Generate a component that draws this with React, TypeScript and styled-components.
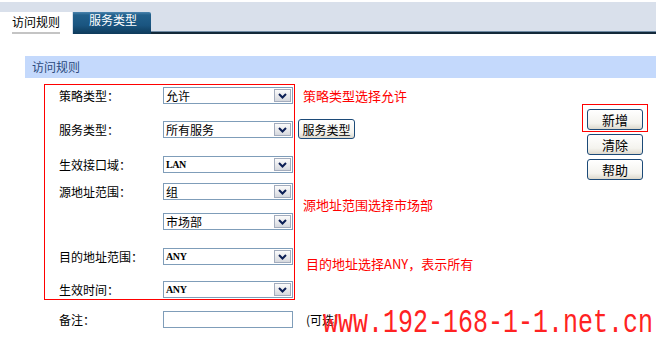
import styled, { createGlobalStyle } from 'styled-components';

const GlobalStyle = createGlobalStyle`
  body {
    margin: 0;
    background: #ffffff;
    font-family: "Noto Sans CJK SC", "Liberation Sans", sans-serif;
    font-size: 12px;
    color: #000;
  }
`;

const Page = styled.div`
  position: relative;
  width: 656px;
  height: 341px;
  overflow: hidden;
  background: #fff;
`;

const TabBar = styled.div`
  margin-top: 2px;
  height: 32px;
  background: #d9e0eb;
  display: flex;
  align-items: flex-end;
`;

const Tab = styled.div<{ $active?: boolean }>`
  height: 22px;
  box-sizing: border-box;
  display: flex;
  align-items: flex-end;
  padding: 0 ${p => (p.$active ? '10px 0 12px' : '14px 0 16px')};
  width: ${p => (p.$active ? '72px' : '78px')};
  margin-left: ${p => (p.$active ? '0' : '1px')};
  background: ${p =>
    p.$active
      ? '#ffffff'
      : 'linear-gradient(#4a84ae 0px, #22608c 3px, #1a5580 60%, #0e3a5a 100%)'};
  color: ${p => (p.$active ? '#000' : '#fff')};
  font-size: 12px;
  border-top-right-radius: ${p => (p.$active ? '0' : '2px')};
`;

const TabLabel = styled.span<{ $active?: boolean }>`
  line-height: 16px;
  padding-bottom: ${p => (p.$active ? '2px' : '4px')};
  border-bottom: 2px solid ${p => (p.$active ? '#c4c4c4' : 'transparent')};
  white-space: nowrap;
`;

const TabFiller = styled.div`
  flex: 1;
  height: 2px;
  border-top: 1px solid #6f8ba5;
  background: #13293a;
`;

const SectionHeader = styled.div`
  margin: 22px 0 0 25px;
  height: 22px;
  background: #c4d9fc;
  color: #2b4a7c;
  font-size: 12px;
  line-height: 22px;
  padding-left: 7px;
`;

const FormGrid = styled.div`
  margin: 6px 0 0 44px;
  display: grid;
  grid-template-columns: 119px 132px 287px 66px;
  grid-template-rows: 34px 35px 27px 30px 35px 33px 22px 8px 30px;
`;

const Cell = styled.div<{ $row: number; $col: number; $span?: number }>`
  grid-row: ${p => p.$row} / span ${p => p.$span ?? 1};
  grid-column: ${p => p.$col};
  min-width: 0;
`;

const RedFrame = styled.div`
  grid-row: 1 / 8;
  grid-column: 1 / 3;
  border: 1px solid #ff0000;
`;

const Label = styled(Cell)`
  padding-left: 15px;
  margin-top: 3px;
  line-height: 17px;
  font-size: 12px;
  white-space: nowrap;
`;

const SelectBox = styled(Cell)`
  margin-top: 3px;
  width: 130px;
  height: 17px;
  box-sizing: border-box;
  border: 1px solid #7f9db9;
  background: #fff;
  display: flex;
  align-items: center;
  justify-content: space-between;
`;

const SelectValue = styled.span<{ $latin?: boolean }>`
  padding-left: 2px;
  font-family: ${p =>
    p.$latin ? '"Liberation Serif", serif' : '"Noto Sans CJK SC", sans-serif'};
  font-size: ${p => (p.$latin ? '10px' : '12px')};
  font-weight: ${p => (p.$latin ? 700 : 400)};
  letter-spacing: ${p => (p.$latin ? '-0.4px' : '0')};
  line-height: 15px;
  white-space: nowrap;
`;

const DropButton = styled.span`
  width: 17px;
  height: 13px;
  margin-right: 1px;
  box-sizing: border-box;
  border: 1px solid #a3acbd;
  background: linear-gradient(#fbfbfb, #e6e7ea 60%, #d5d8de);
  display: flex;
  align-items: center;
  justify-content: center;
`;

const TextInput = styled(Cell)`
  margin-top: 3px;
  width: 130px;
  height: 17px;
  box-sizing: border-box;
  border: 1px solid #7f9db9;
  background: #fff;
`;

const Note = styled(Cell)<{ $top: number; $left: number }>`
  margin-top: ${p => p.$top}px;
  margin-left: ${p => p.$left}px;
  color: #ff0000;
  font-size: 13px;
  line-height: 17px;
  white-space: nowrap;
`;

const Hint = styled(Cell)`
  margin: 3px 0 0 11px;
  font-size: 12px;
  line-height: 17px;
  white-space: nowrap;
`;

const XpButton = styled.button`
  width: 56px;
  height: 21px;
  padding: 0;
  box-sizing: border-box;
  border: 1px solid #1c4a78;
  border-radius: 3px;
  background: linear-gradient(#ffffff, #f4f3ee 70%, #dcd8cc);
  font-family: "Noto Sans CJK SC", sans-serif;
  font-size: 13px;
  line-height: 19px;
  color: #000;
`;

const ServiceButton = styled(XpButton)`
  width: 57px;
  height: 20px;
  font-size: 12px;
  margin: 1px 0 0 3px;
`;

const ActionColumn = styled(Cell)`
  padding-top: 20px;
  display: flex;
  flex-direction: column;
  align-items: flex-start;
  gap: 4px;
`;

const HighlightFrame = styled.div`
  border: 1px solid #ff0000;
  padding: 4px 4px 1px 4px;
  margin-bottom: -2px;
`;

const SideButton = styled(XpButton)`
  margin-left: 5px;
`;

const Watermark = styled.div`
  position: absolute;
  left: 323px;
  top: 304px;
  font-family: "Liberation Mono", monospace;
  font-size: 25px;
  line-height: 30px;
  color: #ff2222;
  white-space: nowrap;
  transform: scaleY(1.33);
  transform-origin: top left;
  pointer-events: none;
`;

const Chevron = () => (
  <svg width="9" height="6" viewBox="0 0 9 6">
    <path d="M1 1 L4.5 4.5 L8 1" fill="none" stroke="#0c1f55" strokeWidth="2" />
  </svg>
);

const Select = ({ row, value, latin }: { row: number; value: string; latin?: boolean }) => (
  <SelectBox $row={row} $col={2}>
    <SelectValue $latin={latin}>{value}</SelectValue>
    <DropButton>
      <Chevron />
    </DropButton>
  </SelectBox>
);

const fields = [
  { row: 1, label: '策略类型：', value: '允许' },
  { row: 2, label: '服务类型：', value: '所有服务' },
  { row: 3, label: '生效接口域：', value: 'LAN', latin: true },
  { row: 4, label: '源地址范围：', value: '组' },
  { row: 5, label: '', value: '市场部' },
  { row: 6, label: '目的地址范围：', value: 'ANY', latin: true },
  { row: 7, label: '生效时间：', value: 'ANY', latin: true },
];

const App = () => (
  <Page>
    <GlobalStyle />
    <TabBar>
      <Tab $active>
        <TabLabel $active>访问规则</TabLabel>
      </Tab>
      <Tab>
        <TabLabel>服务类型</TabLabel>
      </Tab>
      <TabFiller />
    </TabBar>

    <SectionHeader>访问规则</SectionHeader>

    <FormGrid>
      <RedFrame />
      {fields.map(f => (
        <Label key={`l${f.row}`} $row={f.row} $col={1}>
          {f.label}
        </Label>
      ))}
      {fields.map(f => (
        <Select key={`s${f.row}`} row={f.row} value={f.value} latin={f.latin} />
      ))}

      <Note $row={1} $col={3} $top={3} $left={8}>策略类型选择允许</Note>
      <Cell $row={2} $col={3}>
        <ServiceButton>服务类型</ServiceButton>
      </Cell>
      <Note $row={4} $col={3} $top={16} $left={8}>源地址范围选择市场部</Note>
      <Note $row={6} $col={3} $top={10} $left={11}>目的地址选择ANY，表示所有</Note>

      <ActionColumn $row={1} $col={4} $span={5}>
        <HighlightFrame>
          <XpButton>新增</XpButton>
        </HighlightFrame>
        <SideButton>清除</SideButton>
        <SideButton>帮助</SideButton>
      </ActionColumn>

      <Label $row={9} $col={1}>备注：</Label>
      <TextInput $row={9} $col={2} />
      <Hint $row={9} $col={3}>(可选)</Hint>
    </FormGrid>

    <Watermark>www.192-168-1-1.net.cn</Watermark>
  </Page>
);

export default App;
